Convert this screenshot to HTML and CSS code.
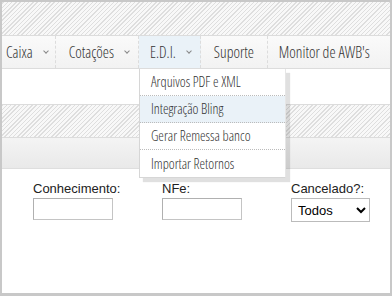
FILE: index.html
```html
<!DOCTYPE html>
<html lang="pt">
<head>
<meta charset="utf-8">
<link rel="stylesheet" href="styles.css">
</head>
<body>
<div class="frame">
  <div class="stripes stripes-top"></div>
  <nav class="menu">
    <ul class="menu-list">
      <li class="menu-item first"><span>Caixa</span><span class="chev"></span></li>
      <li class="menu-item cot"><span>Cotações</span><span class="chev"></span></li>
      <li class="menu-item active"><span>E.D.I.</span><span class="chev"></span>
        <ul class="dropdown">
          <li class="dd-item">Arquivos PDF e XML</li>
          <li class="dd-item hover">Integração Bling</li>
          <li class="dd-item">Gerar Remessa banco</li>
          <li class="dd-item">Importar Retornos</li>
        </ul>
      </li>
      <li class="menu-item sup"><span>Suporte</span></li>
      <li class="menu-item mon"><span>Monitor de AWB's</span></li>
    </ul>
  </nav>
  <div class="blank"></div>
  <div class="stripes stripes-mid"></div>
  <div class="toolbar"></div>
  <form class="filters">
    <label class="field">
      <span class="field-label">Conhecimento:</span>
      <input class="text-input" type="text">
    </label>
    <label class="field">
      <span class="field-label">NFe:</span>
      <input class="text-input" type="text">
    </label>
    <label class="field">
      <span class="field-label">Cancelado?:</span>
      <select class="select-input"><option>Todos</option><option>Sim</option><option>Não</option></select>
    </label>
  </form>
</div>
</body>
</html>
```
FILE: styles.css
```css
* { box-sizing: border-box; }
html, body { margin: 0; padding: 0; background: #fff; }
.frame {
  width: 392px;
  height: 296px;
  border: 2px solid #c8c8c8;
  border-bottom-width: 3px;
  background: #fff;
  overflow: hidden;
  position: relative;
}
.stripes {
  background-color: #f8f8f8;
  background-image: repeating-linear-gradient(-45deg, #f8f8f8 0, #f8f8f8 2px, #dedede 2px, #dedede 3px);
}
.stripes-top { height: 33px; }
.menu {
  height: 34px;
  border-top: 1px solid #dcdcdc;
  border-bottom: 1px solid #dcdcdc;
  background: linear-gradient(#fafafa, #f2f2f2);
}
.menu-list {
  list-style: none;
  margin: 0;
  padding: 0 0 0 4px;
  display: flex;
  height: 100%;
}
.menu-item {
  position: relative;
  display: flex;
  align-items: center;
  padding: 0 12px 0 12px;
  border-right: 1px dashed #dcdcdc;
  font-family: "Open Sans", sans-serif;
  font-stretch: 75%;
  font-weight: 300;
  font-size: 15.5px;
  color: #333;
  white-space: nowrap;
}
.menu-item.first { padding-left: 0; padding-right: 7px; }
.menu-item.cot { padding-left: 13px; padding-right: 9px; }
.menu-item.active { background: #eaf2f8; padding-left: 11px; padding-right: 9px; }
.menu-item.sup { padding-left: 13px; padding-right: 13px; }
.menu-item.mon { padding-left: 11px; padding-right: 12px; border-right: 0; }
.chev {
  width: 4px;
  height: 4px;
  border-right: 1px solid #888;
  border-bottom: 1px solid #888;
  transform: rotate(45deg);
  margin: -3px 0 0 11px;
}
.dropdown {
  position: absolute;
  top: 100%;
  left: 0;
  margin: 1px 0 0;
  padding: 0;
  list-style: none;
  width: 147px;
  background: #fff;
  border-left: 1px solid #d6d6d6;
  border-bottom: 1px solid #d6d6d6;
  border-right: 1px solid #e6e6e6;
  box-shadow: 4px 4px 1px rgba(0, 0, 0, 0.12);
  z-index: 5;
}
.dd-item {
  height: 27px;
  padding: 0 0 1px 11px;
  display: flex;
  align-items: center;
  font-size: 14px;
  color: #333;
  border-bottom: 1px dotted #bbb;
  white-space: nowrap;
}
.dd-item:last-child { border-bottom: 0; }
.dd-item.hover { background: #eaf2f8; }
.blank { height: 35px; }
.stripes-mid { height: 33px; border-top: 1px solid #dcdcdc; }
.toolbar {
  height: 32px;
  border-top: 1px solid #dcdcdc;
  border-bottom: 1px solid #dedede;
  background: linear-gradient(#f4f4f4, #e9e9e9);
}
.filters {
  display: grid;
  grid-template-columns: 129px 129px 100px;
  padding: 12px 0 0 31px;
  font-family: "Liberation Sans", Arial, sans-serif;
  font-size: 13px;
  color: #222;
}
.field { display: flex; flex-direction: column; gap: 2px; align-items: flex-start; }
.text-input {
  width: 80px;
  height: 22px;
  border: 1px solid #c4c4c4;
  border-top-color: #b0b0b0;
  border-left-color: #b0b0b0;
  margin: 0;
}
.select-input {
  width: 79px;
  height: 24px;
  margin: 0;
  border: 1px solid #bbb;
  border-radius: 0;
  background: #fff;
  font-family: "Liberation Sans", Arial, sans-serif;
  font-size: 13px;
  color: #000;
  padding-left: 2px;
}
```
